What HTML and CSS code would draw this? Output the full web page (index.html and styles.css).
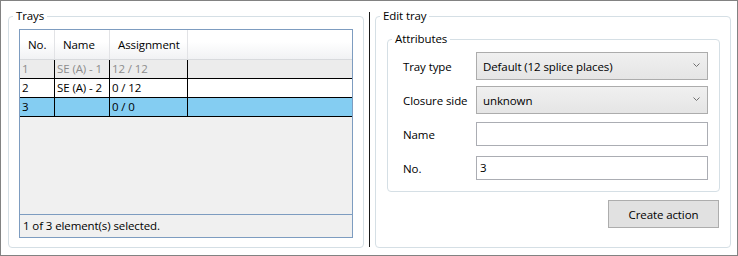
FILE: index.html
```html
<!DOCTYPE html>
<html lang="en">
<head>
<meta charset="utf-8">
<title>Trays</title>
<link rel="stylesheet" href="styles.css">
</head>
<body>
<div class="window">
  <fieldset class="group trays">
    <legend>Trays</legend>
    <div class="trays-body">
      <div class="list">
        <div class="grid">
          <div class="hcell">No.</div>
          <div class="hcell">Name</div>
          <div class="hcell">Assignment</div>
          <div class="hcell last"></div>

          <div class="cell dis">1</div>
          <div class="cell dis">SE (A) - 1</div>
          <div class="cell dis">12 / 12</div>
          <div class="cell dis last"></div>

          <div class="cell">2</div>
          <div class="cell">SE (A) - 2</div>
          <div class="cell">0 / 12</div>
          <div class="cell last"></div>

          <div class="cell sel">3</div>
          <div class="cell sel"></div>
          <div class="cell sel">0 / 0</div>
          <div class="cell sel last"></div>
        </div>
        <div class="empty"></div>
        <div class="status">1 of 3 element(s) selected.</div>
      </div>
    </div>
  </fieldset>
  <div class="divider"></div>
  <fieldset class="group edit">
    <legend>Edit tray</legend>
    <div class="edit-body">
      <fieldset class="group attrs">
        <legend>Attributes</legend>
        <div class="attrs-body">
          <div class="label">Tray type</div>
          <div class="combo"><span>Default (12 splice places)</span><svg class="chev" width="7" height="4" viewBox="0 0 7 4"><polyline points="0.5,0.5 3.5,3.5 6.5,0.5" fill="none" stroke="#707070" stroke-width="1"/></svg></div>
          <div class="label">Closure side</div>
          <div class="combo"><span>unknown</span><svg class="chev" width="7" height="4" viewBox="0 0 7 4"><polyline points="0.5,0.5 3.5,3.5 6.5,0.5" fill="none" stroke="#707070" stroke-width="1"/></svg></div>
          <div class="label">Name</div>
          <div class="textbox"></div>
          <div class="label">No.</div>
          <div class="textbox">3</div>
        </div>
      </fieldset>
      <div class="actions">
        <button class="btn" type="button">Create action</button>
      </div>
    </div>
  </fieldset>
</div>
</body>
</html>
```

FILE: styles.css
```css
* { box-sizing: border-box; }
html, body { margin: 0; padding: 0; background: #fff; }
body {
  font-family: "Open Sans", "Noto Sans", "Liberation Sans", sans-serif;
  font-size: 11.5px;
  letter-spacing: -0.1px;
  color: #000;
}
.window {
  width: 738px;
  height: 256px;
  border: 1px solid #828282;
  background: #fff;
  padding: 7px 6px 7px 7px;
  display: flex;
}
.group {
  margin: 0;
  padding: 0;
  min-inline-size: 0;
  border: 1px solid #d5dfe5;
  border-radius: 4px;
  display: flex;
  flex-direction: column;
}
.group > legend {
  margin-left: 4px;
  padding: 0 3px;
  line-height: 16px;
}
.trays, .edit { width: 356px; }
.divider {
  width: 1px;
  background: #1a1a1a;
  margin: 4px 5px 1px;
}
.trays-body {
  flex: 1;
  display: flex;
  flex-direction: column;
  padding: 5px 10px 9px;
}
.list {
  flex: 1;
  display: flex;
  flex-direction: column;
  border: 1px solid #7d9cc0;
  background: #f0f0f0;
}
.grid {
  display: grid;
  grid-template-columns: 35px 55px 78px 1fr;
}
.hcell {
  height: 30px;
  line-height: 29px;
  padding-left: 8px;
  background: linear-gradient(#ffffff, #ffffff 40%, #f1f2f4);
  border-right: 1px solid #e2e3e6;
  border-bottom: 1px solid #d8dadd;
  white-space: nowrap;
}
.hcell.last { border-right: none; }
.cell {
  height: 19px;
  line-height: 18px;
  padding-left: 2px;
  background: #fff;
  border-right: 1px solid #000;
  border-bottom: 1px solid #000;
  white-space: nowrap;
  overflow: hidden;
}
.cell.last { border-right: none; }
.cell.dis { background: #ececec; color: #8c8c8c; }
.cell.sel { background: #84cdf2; }
.empty { flex: 1; }
.status {
  height: 23px;
  border-top: 1px solid #7d9cc0;
  padding-left: 3px;
  line-height: 22px;
}
.edit-body {
  flex: 1;
  display: flex;
  flex-direction: column;
  padding: 7px 10px 0 11px;
}
.attrs-body {
  display: grid;
  grid-template-columns: 73px 1fr;
  grid-auto-rows: 34px;
  align-items: center;
  padding: 2px 11px 6px 15px;
}
.label { white-space: nowrap; }
.combo {
  height: 28px;
  border: 1px solid #acacac;
  background: linear-gradient(#f0f0f0, #e5e5e5);
  display: flex;
  align-items: center;
  justify-content: space-between;
  padding: 0 7px 0 6px;
}
.chev { display: block; margin-top: -3px; }
.textbox {
  height: 24px;
  border: 1px solid #abadb3;
  background: #fff;
  padding-left: 3px;
  line-height: 22px;
}
.actions {
  display: flex;
  justify-content: flex-end;
  padding: 8px 1px 0 0;
}
.btn {
  width: 111px;
  height: 28px;
  border: 1px solid #adadad;
  background: #e1e1e1;
  font: inherit;
  letter-spacing: inherit;
  color: #000;
  padding: 0;
}
```
